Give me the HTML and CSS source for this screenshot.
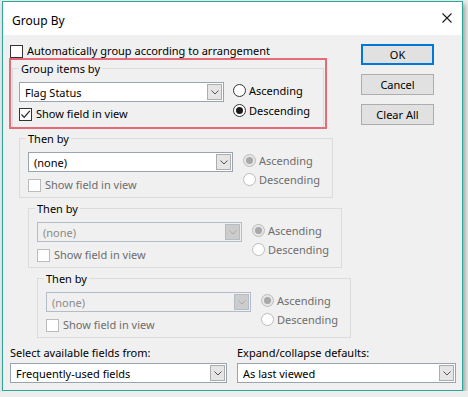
FILE: index.html
```html
<!DOCTYPE HTML>
<html lang="en">
<head>
    <meta name="viewport" content="width=device-width, initial-scale=1">
    <title>Group By</title>
    <link rel="stylesheet" href="styles.css">
</head>
<body>
    <div class="window">
        <div class="titlebar">
            <span class="title">Group By</span>
            <svg class="close" width="10" height="10" viewBox="0 0 10 10">
                <path d="M0.5 0.5 L9.5 9.5 M9.5 0.5 L0.5 9.5" stroke="#1a1a1a" stroke-width="1.1" fill="none"/>
            </svg>
        </div>
        <div class="content">
            <div class="main">
                <div class="left">
                    <div class="check-row auto"><span class="box"></span>Automatically group according to arrangement</div>

                    <div class="highlight">
                        <div class="group first">
                            <div class="group-title">Group items by</div>
                            <div class="group-body">
                                <div class="field">
                                    <div class="combo"><span class="value">Flag Status</span><span class="drop"><svg width="8" height="5" viewBox="0 0 8 5"><path d="M0.5 0.5 L4 4 L7.5 0.5" stroke="#555" fill="none"/></svg></span></div>
                                    <div class="check-row"><span class="box checked"><svg width="11" height="11" viewBox="0 0 11 11"><path d="M1.5 5.5 L4.2 8.3 L9.8 1.8" stroke="#222" stroke-width="1.2" fill="none"/></svg></span>Show field in view</div>
                                </div>
                                <div class="radios">
                                    <div class="radio-row"><span class="radio"></span>Ascending</div>
                                    <div class="radio-row"><span class="radio on"></span>Descending</div>
                                </div>
                            </div>
                        </div>
                    </div>

                    <div class="group then step1">
                        <div class="group-title">Then by</div>
                        <div class="group-body">
                            <div class="field">
                                <div class="combo"><span class="value">(none)</span><span class="drop"><svg width="8" height="5" viewBox="0 0 8 5"><path d="M0.5 0.5 L4 4 L7.5 0.5" stroke="#555" fill="none"/></svg></span></div>
                                <div class="check-row off"><span class="box"></span>Show field in view</div>
                            </div>
                            <div class="radios off">
                                <div class="radio-row"><span class="radio on"></span>Ascending</div>
                                <div class="radio-row"><span class="radio"></span>Descending</div>
                            </div>
                        </div>
                    </div>

                    <div class="group then step2">
                        <div class="group-title">Then by</div>
                        <div class="group-body">
                            <div class="field">
                                <div class="combo off"><span class="value">(none)</span><span class="drop"><svg width="8" height="5" viewBox="0 0 8 5"><path d="M0.5 0.5 L4 4 L7.5 0.5" stroke="#aaa" fill="none"/></svg></span></div>
                                <div class="check-row off"><span class="box"></span>Show field in view</div>
                            </div>
                            <div class="radios off">
                                <div class="radio-row"><span class="radio on"></span>Ascending</div>
                                <div class="radio-row"><span class="radio"></span>Descending</div>
                            </div>
                        </div>
                    </div>

                    <div class="group then step3">
                        <div class="group-title">Then by</div>
                        <div class="group-body">
                            <div class="field">
                                <div class="combo off"><span class="value">(none)</span><span class="drop"><svg width="8" height="5" viewBox="0 0 8 5"><path d="M0.5 0.5 L4 4 L7.5 0.5" stroke="#aaa" fill="none"/></svg></span></div>
                                <div class="check-row off"><span class="box"></span>Show field in view</div>
                            </div>
                            <div class="radios off">
                                <div class="radio-row"><span class="radio on"></span>Ascending</div>
                                <div class="radio-row"><span class="radio"></span>Descending</div>
                            </div>
                        </div>
                    </div>
                </div>

                <div class="buttons">
                    <button class="btn default">OK</button>
                    <button class="btn">Cancel</button>
                    <button class="btn">Clear All</button>
                </div>
            </div>

            <div class="bottom">
                <div class="pick fields">
                    <div class="label">Select available fields from:</div>
                    <div class="combo"><span class="value">Frequently-used fields</span><span class="drop"><svg width="8" height="5" viewBox="0 0 8 5"><path d="M0.5 0.5 L4 4 L7.5 0.5" stroke="#555" fill="none"/></svg></span></div>
                </div>
                <div class="pick expand">
                    <div class="label">Expand/collapse defaults:</div>
                    <div class="combo"><span class="value">As last viewed</span><span class="drop"><svg width="8" height="5" viewBox="0 0 8 5"><path d="M0.5 0.5 L4 4 L7.5 0.5" stroke="#555" fill="none"/></svg></span></div>
                </div>
            </div>
        </div>
    </div>
</body>
</html>
```

FILE: styles.css
```css
body {
    margin: 0;
    background: #ededed;
    font-family: "Noto Sans", "Open Sans", sans-serif;
    font-size: 11px;
    color: #000;
}
.window {
    margin: 1px 0 0 2px;
    width: 461px;
    height: 390px;
    box-sizing: border-box;
    border: 1px solid #2ba89a;
    background: #f0f0f0;
    box-shadow: 2px 3px 5px rgba(0, 0, 0, 0.35);
}
.titlebar {
    height: 33px;
    box-sizing: border-box;
    background: white;
    display: flex;
    align-items: center;
    justify-content: space-between;
    padding: 3px 10px 0 9px;
    font-size: 12px;
}
.close {
    margin-top: -4px;
}
.content {
    padding: 9px 0 0 7px;
}
.main {
    display: flex;
}
.left {
    width: 343px;
}
.check-row {
    display: flex;
    align-items: center;
    height: 14px;
    line-height: 14px;
    white-space: nowrap;
}
.box {
    width: 13px;
    height: 13px;
    box-sizing: border-box;
    border: 1px solid #333;
    background: white;
    margin-right: 4px;
    display: flex;
    align-items: center;
    justify-content: center;
    flex: none;
}
.check-row.off {
    color: #6d6d6d;
}
.check-row.off .box {
    border-color: #bcbcbc;
}
.highlight {
    margin-left: -1px;
    width: 318px;
    height: 71px;
    box-sizing: border-box;
    border: 2px solid #e56b79;
    padding: 8px 0 0 1px;
    overflow: hidden;
}
.group {
    border: 1px solid #dcdcdc;
    box-sizing: border-box;
}
.group.first {
    width: 312px;
    height: 80px;
    border-bottom: none;
}
.group-title {
    width: fit-content;
    margin: -8px 0 0 6px;
    padding: 0 2px;
    background: #f0f0f0;
    line-height: 16px;
}
.group-body {
    display: flex;
    padding: 5px 0 0 6px;
}
.field {
    display: flex;
    flex-direction: column;
    gap: 5px;
}
.combo {
    width: 205px;
    height: 20px;
    box-sizing: border-box;
    border: 1px solid #9aa3b0;
    background: white;
    display: flex;
    align-items: center;
    justify-content: space-between;
    padding: 0 1px 0 5px;
}
.combo.off {
    background: #f0f0f0;
    color: #8a8a8a;
    border-color: #b4bcc8;
}
.drop {
    width: 15px;
    height: 16px;
    box-sizing: border-box;
    border: 1px solid #adadad;
    background: #e5e5e5;
    display: flex;
    align-items: center;
    justify-content: center;
}
.combo.off .drop {
    background: #cccccc;
    border-color: #b4bcc8;
}
.radios {
    margin: -2px 0 0 9px;
}
.radio-row {
    display: flex;
    align-items: center;
    height: 20px;
    white-space: nowrap;
}
.radio {
    width: 13px;
    height: 13px;
    box-sizing: border-box;
    border: 1px solid #333;
    border-radius: 50%;
    background: white;
    margin-right: 3px;
    display: flex;
    align-items: center;
    justify-content: center;
}
.radio.on::after {
    content: "";
    width: 7px;
    height: 7px;
    border-radius: 50%;
    background: #1a1a1a;
}
.radios.off {
    color: #6d6d6d;
}
.radios.off .radio {
    border-color: #bcbcbc;
}
.radios.off .radio.on {
    background: #e6e6e6;
}
.radios.off .radio.on::after {
    background: #a8a8a8;
}
.then {
    width: 314px;
    height: 60px;
    margin-top: 10px;
}
.then .group-body {
    padding-left: 8px;
}
.then .field {
    gap: 6px;
}
.then .radios {
    margin: -1px 0 0 10px;
}
.then .radio-row {
    height: 19px;
}
.step1 {
    margin-top: 9px;
    margin-left: 9px;
}
.step2 {
    margin-left: 18px;
}
.step3 {
    margin-left: 27px;
}
.buttons {
    margin-left: 8px;
    display: flex;
    flex-direction: column;
    gap: 9px;
}
.btn {
    width: 73px;
    height: 21px;
    border: 1px solid #adadad;
    background: #e1e1e1;
    font-family: inherit;
    font-size: 11px;
    color: #000;
    padding: 0;
}
.btn.default {
    border: 2px solid #0078d7;
}
.bottom {
    display: flex;
    gap: 10px;
    margin-top: 7px;
}
.label {
    line-height: 16px;
    margin-bottom: 2px;
}
.fields .combo {
    width: 217px;
}
.expand .combo {
    width: 219px;
}
```
